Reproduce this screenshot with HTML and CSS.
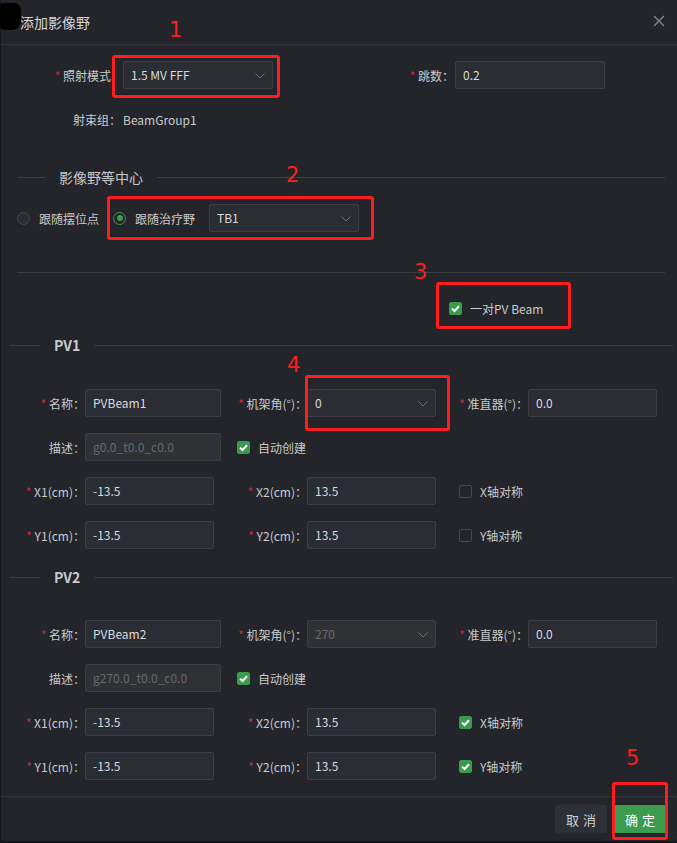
FILE: index.html
```html
<!DOCTYPE html>
<html lang="zh-CN">
<head>
<meta charset="utf-8">
<title>添加影像野</title>
<link rel="stylesheet" href="styles.css">
</head>
<body>
<div class="dialog">
  <div class="header">
    <span class="title">添加影像野</span>
    <svg class="close" width="12" height="12" viewBox="0 0 12 12"><path d="M1 1 L11 11 M11 1 L1 11" stroke="#8a8c91" stroke-width="1.2" fill="none"/></svg>
  </div>

  <div class="content">
    <div class="row row1">
      <label class="lab lab-mode"><i>*</i> 照射模式</label>
      <div class="select sel-mode">1.5 MV FFF<svg class="chev" width="10" height="6" viewBox="0 0 10 6"><path d="M0.5 0.5 L5 5 L9.5 0.5" stroke="#6d7076" fill="none"/></svg></div>
      <label class="lab lab-count"><i>*</i> 跳数：</label>
      <div class="input w150">0.2</div>
    </div>

    <div class="beamgroup">
      <span class="lab lab-bg">射束组：</span><span class="bg-val">BeamGroup1</span>
    </div>

    <div class="divider div-iso">
      <span class="line l1"></span><span class="dtext">影像野等中心</span><span class="line grow"></span>
    </div>

    <div class="row radio-row">
      <span class="radio"></span><span class="rlab">跟随摆位点</span>
      <span class="radio on"><span class="dot"></span></span><span class="rlab">跟随治疗野</span>
      <div class="select sel-tb">TB1<svg class="chev" width="10" height="6" viewBox="0 0 10 6"><path d="M0.5 0.5 L5 5 L9.5 0.5" stroke="#6d7076" fill="none"/></svg></div>
    </div>

    <div class="hline"></div>

    <div class="row pair-row">
      <span class="cb on"><svg width="13" height="13" viewBox="0 0 13 13"><path d="M3 6.6 L5.5 9 L10 4.2" stroke="#fff" stroke-width="2" fill="none"/></svg></span><span class="cblab">一对PV Beam</span>
    </div>

    <div class="divider div-pv">
      <span class="line l2"></span><span class="dtext bold">PV1</span><span class="line grow"></span>
    </div>

    <div class="pv-rows first1">
      <div class="row">
        <label class="lab c1"><i>*</i> 名称：</label>
        <div class="input w136">PVBeam1</div>
        <label class="lab c2"><i>*</i> 机架角(°)：</label>
        <div class="select w129">0<svg class="chev" width="10" height="6" viewBox="0 0 10 6"><path d="M0.5 0.5 L5 5 L9.5 0.5" stroke="#6d7076" fill="none"/></svg></div>
        <label class="lab c3"><i>*</i> 准直器(°)：</label>
        <div class="input w129">0.0</div>
      </div>
      <div class="row">
        <label class="lab c1">描述：</label>
        <div class="input w136 disabled">g0.0_t0.0_c0.0</div>
        <span class="cb on cb-auto"><svg width="13" height="13" viewBox="0 0 13 13"><path d="M3 6.6 L5.5 9 L10 4.2" stroke="#fff" stroke-width="2" fill="none"/></svg></span><span class="cblab">自动创建</span>
      </div>
      <div class="row">
        <label class="lab c1"><i>*</i> X1(cm)：</label>
        <div class="input w129">-13.5</div>
        <label class="lab c2b"><i>*</i> X2(cm)：</label>
        <div class="input w129">13.5</div>
        <span class="cb cb-sym"></span><span class="cblab sym">X轴对称</span>
      </div>
      <div class="row">
        <label class="lab c1"><i>*</i> Y1(cm)：</label>
        <div class="input w129">-13.5</div>
        <label class="lab c2b"><i>*</i> Y2(cm)：</label>
        <div class="input w129">13.5</div>
        <span class="cb cb-sym"></span><span class="cblab sym">Y轴对称</span>
      </div>
    </div>

    <div class="divider div-pv2">
      <span class="line l2"></span><span class="dtext bold">PV2</span><span class="line grow"></span>
    </div>

    <div class="pv-rows first2">
      <div class="row">
        <label class="lab c1"><i>*</i> 名称：</label>
        <div class="input w136">PVBeam2</div>
        <label class="lab c2"><i>*</i> 机架角(°)：</label>
        <div class="select w129 disabled">270<svg class="chev" width="10" height="6" viewBox="0 0 10 6"><path d="M0.5 0.5 L5 5 L9.5 0.5" stroke="#6d7076" fill="none"/></svg></div>
        <label class="lab c3"><i>*</i> 准直器(°)：</label>
        <div class="input w129">0.0</div>
      </div>
      <div class="row">
        <label class="lab c1">描述：</label>
        <div class="input w136 disabled">g270.0_t0.0_c0.0</div>
        <span class="cb on cb-auto"><svg width="13" height="13" viewBox="0 0 13 13"><path d="M3 6.6 L5.5 9 L10 4.2" stroke="#fff" stroke-width="2" fill="none"/></svg></span><span class="cblab">自动创建</span>
      </div>
      <div class="row">
        <label class="lab c1"><i>*</i> X1(cm)：</label>
        <div class="input w129">-13.5</div>
        <label class="lab c2b"><i>*</i> X2(cm)：</label>
        <div class="input w129">13.5</div>
        <span class="cb on cb-sym"><svg width="13" height="13" viewBox="0 0 13 13"><path d="M3 6.6 L5.5 9 L10 4.2" stroke="#fff" stroke-width="2" fill="none"/></svg></span><span class="cblab sym">X轴对称</span>
      </div>
      <div class="row">
        <label class="lab c1"><i>*</i> Y1(cm)：</label>
        <div class="input w129">-13.5</div>
        <label class="lab c2b"><i>*</i> Y2(cm)：</label>
        <div class="input w129">13.5</div>
        <span class="cb on cb-sym"><svg width="13" height="13" viewBox="0 0 13 13"><path d="M3 6.6 L5.5 9 L10 4.2" stroke="#fff" stroke-width="2" fill="none"/></svg></span><span class="cblab sym">Y轴对称</span>
      </div>
    </div>
  </div>

  <div class="footer">
    <button class="btn cancel">取消</button>
    <button class="btn ok">确定</button>
  </div>

  <div class="blob"></div>

  <div class="mark box1"></div><span class="num n1">1</span>
  <div class="mark box2"></div><span class="num n2">2</span>
  <div class="mark box3"></div><span class="num n3">3</span>
  <div class="mark box4"></div><span class="num n4">4</span>
  <div class="mark box5"></div><span class="num n5">5</span>
</div>
</body>
</html>
```

FILE: styles.css
```css
* { box-sizing: border-box; }
html, body { margin: 0; padding: 0; }
body {
  background: #141518;
  width: 677px;
  height: 843px;
  overflow: hidden;
  font-family: "Noto Sans CJK SC", "Noto Sans", sans-serif;
  font-size: 12px;
  color: #c9cacc;
}
.dialog {
  position: relative;
  margin-left: 1px;
  width: 676px;
  height: 841px;
  background: #23252a;
  border-radius: 0 0 4px 4px;
  display: flex;
  flex-direction: column;
}
.header {
  height: 45px;
  flex: none;
  border-bottom: 1px solid #34363b;
  display: flex;
  align-items: center;
  justify-content: space-between;
  padding: 0 12px 0 19px;
}
.title { font-size: 14px; color: #d6d7d9; }
.close { display: block; margin-top: -2px; }

.content { flex: 1; }
.row { display: flex; align-items: center; }
.lab { flex: none; text-align: right; white-space: nowrap; color: #c9cacc; }
.lab i { font-style: normal; color: #c0303a; }

.input, .select {
  flex: none;
  height: 28px;
  line-height: 26px;
  background: #2a2d34;
  border: 1px solid #3b3e44;
  border-radius: 2px;
  padding: 0 7px;
  color: #d9dadc;
  font-size: 12px;
  position: relative;
}
.select .chev { position: absolute; right: 7px; top: 11px; }
.disabled { background: #2f3135; color: #66686c; }
.w150 { width: 150px; }
.w136 { width: 136px; }
.w129 { width: 129px; }

.row1 { margin-top: 16px; }
.lab-mode { width: 110px; display: inline-block; }
.sel-mode { width: 150px; margin-left: 12px; }
.lab-count { width: 181px; margin-right: 1px; }

.beamgroup { margin-top: 21px; height: 20px; line-height: 20px; display: flex; }
.lab-bg { width: 120px; display: inline-block; }
.bg-val { margin-left: 2px; color: #c9cacc; }

.divider { display: flex; align-items: center; height: 20px; }
.line { height: 1px; background: #3a3c41; flex: none; }
.line.grow { flex: 1; }
.dtext { padding: 0 14px; font-size: 14px; color: #c9cacc; line-height: 20px; }
.dtext.bold { font-weight: 700; }
.div-iso { margin: 37px 12px 0 17px; }
.l1 { width: 27px; }
.div-pv { margin: 17px 4px 0 9px; }
.div-pv2 { margin: 18px 4px 0 9px; }
.l2 { width: 30px; }

.radio-row { margin-top: 17px; height: 28px; padding-left: 16px; }
.radio {
  flex: none;
  width: 13px; height: 13px;
  border-radius: 50%;
  border: 1px solid #45474d;
  background: #2a2c31;
  display: flex; align-items: center; justify-content: center;
}
.radio.on { border-color: #3a9a4e; margin-left: 14px; background: transparent; }
.dot { width: 6px; height: 6px; border-radius: 50%; background: #3a9a4e; }
.rlab { margin-left: 9px; color: #c9cacc; }
.sel-tb { width: 150px; margin-left: 14px; }

.hline { margin: 40px 12px 0 16px; height: 1px; background: #3a3c41; }

.pair-row { margin-top: 25px; height: 20px; padding-left: 448px; }
.cb {
  flex: none;
  width: 13px; height: 13px;
  border-radius: 2px;
  border: 1px solid #45474d;
  display: block;
}
.cb svg { display: block; margin: -1px; }
.cb.on { background: #3a9a4e; border-color: #3a9a4e; }
.cblab { margin-left: 8px; color: #c9cacc; white-space: nowrap; }

.pv-rows { display: flex; flex-direction: column; gap: 16px; }
.pv-rows .row { height: 28px; }
.first1 { margin-top: 34px; }
.first2 { margin-top: 33px; }
.c1 { width: 84px; margin-right: 0; }
.c2 { width: 86px; }
.c2b { width: 93px; }
.c3 { width: 92px; }
.cb-auto { margin-left: 16px; }
.cb-sym { margin-left: 23px; }
.cblab.sym { margin-left: 8px; }

.footer {
  flex: none;
  height: 45px;
  border-top: 1px solid #34363b;
  display: flex;
  justify-content: flex-end;
  align-items: flex-start;
  padding: 8px 11px 0 0;
  gap: 7px;
}
.btn {
  width: 52px;
  height: 28px;
  border: none;
  border-radius: 2px;
  font-family: "Noto Sans CJK SC", sans-serif;
  font-size: 13px;
  letter-spacing: 4px;
  text-indent: 4px;
  padding: 0;
}
.cancel { background: #2d3036; color: #cfd0d2; }
.ok { background: #3b9b4e; color: #ffffff; }

.blob {
  position: absolute;
  left: -1px; top: 3px;
  width: 21px; height: 27px;
  background: #000;
  border-radius: 3px 7px 9px 5px;
}

.mark {
  position: absolute;
  border: 3px solid #ff1e1e;
  border-radius: 3px;
}
.box1 { left: 111px; top: 55px; width: 168px; height: 43px; }
.box2 { left: 106px; top: 196px; width: 267px; height: 44px; }
.box3 { left: 435px; top: 282px; width: 135px; height: 47px; }
.box4 { left: 304px; top: 375px; width: 145px; height: 56px; }
.box5 { left: 611px; top: 782px; width: 56px; height: 58px; }
.num {
  position: absolute;
  font-family: "DejaVu Sans", sans-serif;
  font-size: 21px;
  line-height: 1;
  color: #ff1e1e;
}
.n1 { left: 168px; top: 20px; }
.n2 { left: 285px; top: 165px; }
.n3 { left: 413px; top: 262px; }
.n4 { left: 286px; top: 355px; }
.n5 { left: 625px; top: 748px; }
```
